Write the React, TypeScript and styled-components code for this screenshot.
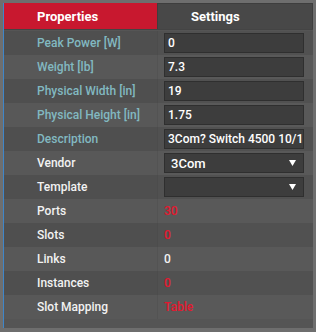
import React from "react";
import styled, { createGlobalStyle } from "styled-components";

const Global = createGlobalStyle`
  html, body { margin: 0; padding: 0; background: #6e6e6e; }
  body { font-family: Roboto, "Liberation Sans", Arial, sans-serif; }
`;

const Frame = styled.div`
  width: 316px;
  height: 332px;
  box-sizing: border-box;
  padding: 3px 3px 4px 3px;
  background: #6e6e6e;
`;

const Panel = styled.div`
  height: 100%;
  box-sizing: border-box;
  border-left: 1px solid #3f86c9;
  background: #555555;
  display: flex;
  flex-direction: column;
`;

const Tabs = styled.div`
  display: grid;
  grid-template-columns: 153px 1fr;
  height: 26px;
  border-bottom: 1px solid #444;
  box-sizing: content-box;
`;

const Tab = styled.div<{ $active?: boolean }>`
  display: flex;
  align-items: center;
  padding-left: 33px;
  font-size: 13px;
  font-weight: 700;
  color: #fff;
  background: ${(p) => (p.$active ? "#c8182f" : "#484848")};
  border: ${(p) => (p.$active ? "none" : "1px solid #3e3e3e")};
  border-bottom: none;
  box-sizing: border-box;
`;

const Table = styled.div`
  display: flex;
  flex-direction: column;
  margin-top: 1px;
`;

const Row = styled.div<{ $odd: boolean }>`
  display: grid;
  grid-template-columns: 153px 1fr;
  height: 24px;
  background: ${(p) => (p.$odd ? "#585858" : "#4f4f4f")};
`;

const Label = styled.div<{ $editable?: boolean }>`
  display: flex;
  align-items: center;
  padding-left: 33px;
  font-size: 12px;
  font-weight: 500;
  color: ${(p) => (p.$editable ? "#82b9c1" : "#f2f2f2")};
  white-space: nowrap;
`;

const Value = styled.div<{ $red?: boolean }>`
  display: flex;
  align-items: center;
  padding: 0 9px 0 6px;
  font-size: 12px;
  font-weight: 500;
  border-left: 1px solid rgba(0, 0, 0, 0.06);
  background: rgba(255, 255, 255, 0.012);
  color: ${(p) => (p.$red ? "#e3182f" : "#f2f2f2")};
  min-width: 0;
`;

const Input = styled.div`
  flex: 1;
  height: 20px;
  box-sizing: border-box;
  background: #3d3d3d;
  border: 1px solid #2f2f2f;
  color: #fff;
  font-size: 12px;
  font-weight: 500;
  display: flex;
  align-items: center;
  padding-left: 3px;
  overflow: hidden;
  white-space: nowrap;
  min-width: 0;
`;

const Select = styled(Input)`
  justify-content: space-between;
  padding: 0 7px 0 6px;
  font-size: 13px;
`;

const Arrow = styled.svg`
  width: 7px;
  height: 6px;
  flex: none;
`;

type Item = {
  label: string;
  editable?: boolean;
  kind: "input" | "select" | "text";
  value: string;
  red?: boolean;
};

const items: Item[] = [
  { label: "Peak Power [W]", editable: true, kind: "input", value: "0" },
  { label: "Weight [lb]", editable: true, kind: "input", value: "7.3" },
  { label: "Physical Width [in]", editable: true, kind: "input", value: "19" },
  { label: "Physical Height [in]", editable: true, kind: "input", value: "1.75" },
  { label: "Description", editable: true, kind: "input", value: "3Com? Switch 4500 10/100" },
  { label: "Vendor", kind: "select", value: "3Com" },
  { label: "Template", kind: "select", value: "" },
  { label: "Ports", kind: "text", value: "30", red: true },
  { label: "Slots", kind: "text", value: "0", red: true },
  { label: "Links", kind: "text", value: "0" },
  { label: "Instances", kind: "text", value: "0", red: true },
  { label: "Slot Mapping", kind: "text", value: "Table", red: true },
];

export default function App() {
  return (
    <>
      <Global />
      <Frame>
        <Panel>
          <Tabs>
            <Tab $active>Properties</Tab>
            <Tab>Settings</Tab>
          </Tabs>
          <Table>
            {items.map((it, i) => (
              <Row key={it.label} $odd={i % 2 === 1}>
                <Label $editable={it.editable}>{it.label}</Label>
                <Value $red={it.red}>
                  {it.kind === "input" && <Input>{it.value}</Input>}
                  {it.kind === "select" && (
                    <Select>
                      <span>{it.value}</span>
                      <Arrow viewBox="0 0 7 6">
                        <path d="M0 0 H7 L3.5 6 Z" fill="#fff" />
                      </Arrow>
                    </Select>
                  )}
                  {it.kind === "text" && it.value}
                </Value>
              </Row>
            ))}
          </Table>
        </Panel>
      </Frame>
    </>
  );
}
